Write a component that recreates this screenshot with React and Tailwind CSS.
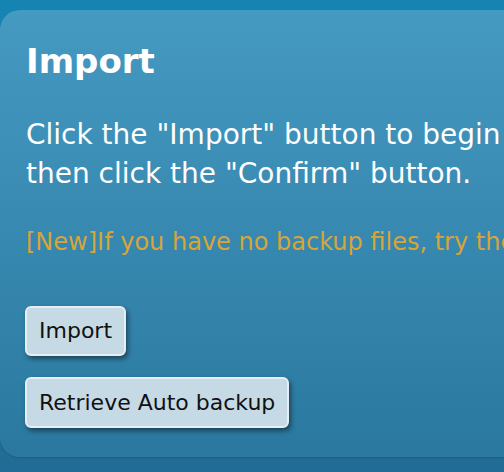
export default function App() {
  const font = { fontFamily: '"DejaVu Sans", Verdana, sans-serif' };
  return (
    <div
      className="w-[504px] h-[472px] overflow-hidden bg-gradient-to-b from-[#1685b3] to-[#216c96] pt-[10px]"
      style={font}
    >
      <div className="w-[560px] rounded-l-[20px] bg-gradient-to-b from-[#459ac1] to-[#2a78a0] pl-[26px] pt-[31px] pb-[29px] shadow-[0_1px_2px_rgba(0,0,0,0.15)]">
        <h2 className="text-[34px] leading-[40px] font-bold text-white whitespace-nowrap">
          Import
        </h2>
        <p className="mt-[34px] text-[28px] leading-[39px] text-white w-[500px]">
          Click the "Import" button to begin then click the "Confirm" button.
        </p>
        <p className="mt-[35px] text-[24px] leading-[28px] text-[#d6a53a] whitespace-nowrap">
          [New]If you have no backup files, try the Auto backup.
        </p>
        <div className="mt-[50px] flex flex-col items-start gap-[21px] -ml-px">
          <button className="h-[50px] px-[12px] rounded-[6px] border-2 border-[#e4eef4] bg-[#c6dae6] text-[22px] text-[#111] leading-none shadow-[2px_3px_5px_rgba(0,0,0,0.45)]">
            Import
          </button>
          <button className="h-[51px] px-[12px] rounded-[6px] border-2 border-[#e4eef4] bg-[#c6dae6] text-[22px] text-[#111] leading-none shadow-[2px_3px_5px_rgba(0,0,0,0.45)]">
            Retrieve Auto backup
          </button>
        </div>
      </div>
    </div>
  );
}
